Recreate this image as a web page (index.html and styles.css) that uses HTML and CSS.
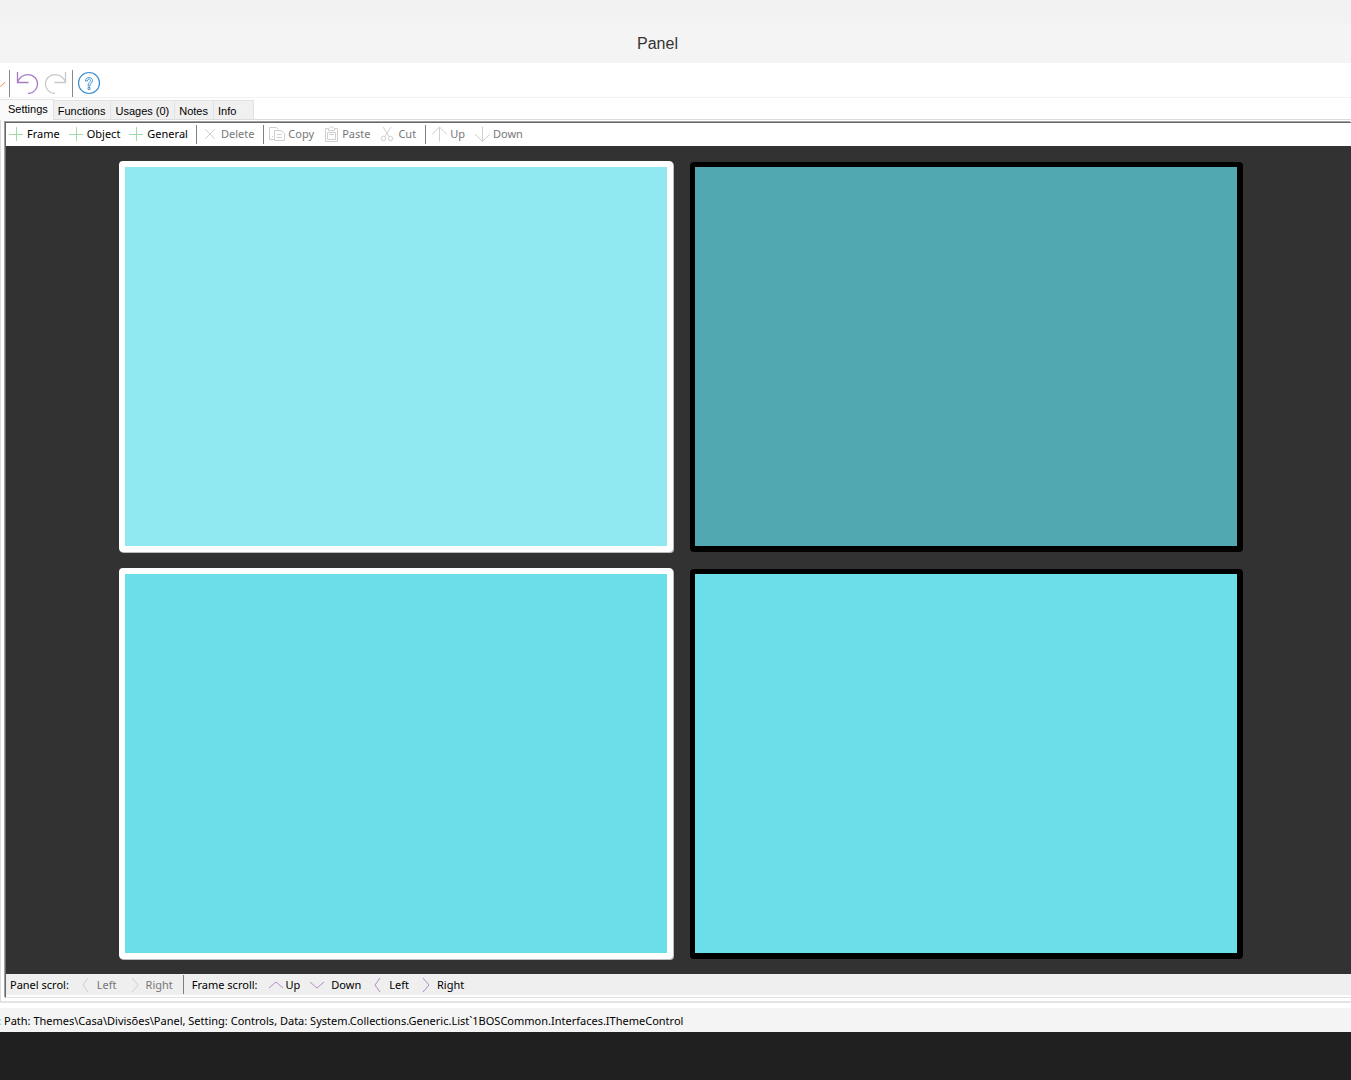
FILE: index.html
```html
<!DOCTYPE html>
<html lang="en">
<head>
<meta charset="utf-8">
<title>Panel</title>
<link rel="stylesheet" href="styles.css">
</head>
<body>
<header class="titlebar"><h1 class="title">Panel</h1></header>

<div class="quickbar">
  <svg class="check" viewBox="0 0 5 24"><path d="M0 14.500L1 15.500L5 11" stroke="#ef8a5a"/></svg>
  <span class="tall-sep"></span>
  <button class="quick" aria-label="Undo"><svg viewBox="0 0 24 26"><path d="M1.500 2V12.500H12.500M1.500 12C5 4 14 2.500 19 7.500C24 13 21 23 12 23.500" stroke="#a57bc4" stroke-width="1.300"/></svg></button>
  <button class="quick" aria-label="Redo" disabled><svg viewBox="0 0 24 26"><path d="M22.500 2V12.500H11.500M22.500 12C19 4 10 2.500 5 7.500C0 13 3 23 12 23.500" stroke="#c8c8c8" stroke-width="1.300"/></svg></button>
  <span class="tall-sep"></span>
  <button class="quick help" aria-label="Help"><svg viewBox="0 0 24 26"><circle cx="12" cy="13" r="10.500" stroke="#3a8dd0" stroke-width="1.200"/><path d="M8.500 11C8 6.500 15.500 6.500 15.500 10.500C15.500 13 13 13 13 16H11C11 12.500 13.500 12 13.500 10.500C13.500 8.500 10.500 8.500 10.500 11ZM11 17.500H13V19.500H11Z" stroke="#3a8dd0" stroke-width=".9"/></svg></button>
</div>

<div class="tabs" role="tablist">
  <button class="tab active" role="tab" aria-selected="true">Settings</button>
  <button class="tab" role="tab">Functions</button>
  <button class="tab" role="tab">Usages (0)</button>
  <button class="tab" role="tab">Notes</button>
  <button class="tab last" role="tab">Info</button>
</div>

<main class="page">
  <div class="editor">
    <div class="bar">
      <button class="tool"><svg viewBox="0 0 16 16"><path class="green" d="M1 8.500H15M8.500 1V15"/></svg>Frame</button>
      <button class="tool"><svg viewBox="0 0 16 16"><path class="green" d="M1 8.500H15M8.500 1V15"/></svg>Object</button>
      <button class="tool"><svg viewBox="0 0 16 16"><path class="green" d="M1 8.500H15M8.500 1V15"/></svg>General</button>
      <span class="sep"></span>
      <button class="tool" disabled><svg viewBox="0 0 16 16"><path class="grey" d="M3 3L13 13M13 3L3 13"/></svg>Delete</button>
      <span class="sep"></span>
      <button class="tool" disabled><svg viewBox="0 0 16 16"><path class="grey" d="M5.500 13.500H.5V1.500H7.500L9.500 3.500M5.500 4.500H12L15.500 7.500V14.500H5.500ZM8 8.500H13M8 11.500H13M3 10.500H4"/></svg>Copy</button>
      <button class="tool" disabled><svg viewBox="0 0 16 16"><path class="grey" d="M5.500 2.500H2.500V15.500H14.500V2.500H11.500M5.500 4.500V2.500L8.500 .5L11.500 2.500V4.500ZM4.500 6.500H12.500V13.500H4.500ZM6 8.500H11"/></svg>Paste</button>
      <button class="tool" disabled><svg viewBox="0 0 16 16"><path class="grey" d="M4 1L10.500 11M12 1L5.500 11"/><circle class="grey" cx="4.500" cy="12.500" r="2.200"/><circle class="grey" cx="11.500" cy="12.500" r="2.200"/></svg>Cut</button>
      <span class="sep"></span>
      <button class="tool" disabled><svg viewBox="0 0 16 16"><path class="grey" d="M8.500 15.500V1.500M1 8.500L8.500 1L16 8.500"/></svg>Up</button>
      <button class="tool" disabled><svg viewBox="0 0 16 16"><path class="grey" d="M8.500 .5V15M1 8L8.500 15.500L16 8"/></svg>Down</button>
    </div>
    <div class="canvas">
      <div class="frame light pale"></div>
      <div class="frame dark teal"></div>
      <div class="frame light"></div>
      <div class="frame dark"></div>
    </div>
    <div class="bar scrollbar">
      <span class="label">Panel scrol:</span>
      <button class="tool" disabled><svg viewBox="0 0 16 16"><path class="grey" d="M10 1L5 8L10 15"/></svg>Left</button>
      <button class="tool" disabled><svg viewBox="0 0 16 16"><path class="grey" d="M5 1L11 8L5 15"/></svg>Right</button>
      <span class="sep"></span>
      <span class="label after">Frame scroll:</span>
      <button class="tool"><svg viewBox="0 0 16 16"><path class="purple" d="M2 11L9 5L16 11"/></svg>Up</button>
      <button class="tool wide"><svg viewBox="0 0 16 16"><path class="purple" d="M1 5L8 11L15 5"/></svg>Down</button>
      <button class="tool"><svg viewBox="0 0 16 16"><path class="purple" d="M10 1L5 8L10 15"/></svg>Left</button>
      <button class="tool"><svg viewBox="0 0 16 16"><path class="purple" d="M5 1L11 8L5 15"/></svg>Right</button>
    </div>
  </div>
</main>

<div class="status"><span class="colon">:</span>Path: Themes\Casa\Divisões\Panel, Setting: Controls, Data: System.Collections.Generic.List`1BOSCommon.Interfaces.IThemeControl</div>
<footer class="desktop"></footer>
</body>
</html>
```
FILE: styles.css
```css
* { box-sizing: border-box; }
body {
  margin: 0;
  min-height: 100vh;
  display: flex;
  flex-direction: column;
  background: #fff;
  color: #000;
  font: 11px/16px "Noto Sans", "Open Sans", sans-serif;
}
button {
  margin: 0;
  padding: 0;
  border: 0;
  background: none;
  color: inherit;
  font: inherit;
}
svg { display: block; fill: none; flex: none; }
.titlebar {
  height: 63px;
  padding-top: 24px;
  background: linear-gradient(#f2f2f2 23px, #f4f4f4 23px);
  padding-right: 36px;
}
.title {
  margin: 0;
  text-align: center;
  color: #333;
  font: 16px/39px "Liberation Sans", Arial, sans-serif;
}
.quickbar {
  display: flex;
  align-items: center;
  height: 35px;
  padding-top: 6px;
  border-bottom: 1px solid #f2f2f2;
}
.check { width: 5px; height: 24px; }
.tall-sep { width: 1px; height: 27px; margin: 0 4px; background: #888; }
.quick { width: 27px; height: 26px; padding: 0 1px 0 2px; }
.quick svg { width: 24px; height: 26px; }
.help { margin-left: -2px; }
.tabs {
  display: flex;
  align-items: flex-end;
  height: 22px;
  font: 11px/16px "Liberation Sans", Arial, sans-serif;
  border-bottom: 1px solid #dcdcdc;
}
.tab {
  height: 19px;
  padding: 2px 5px 0 4px;
  background: #f0f0f0;
  border: 1px solid #e2e2e2;
  border-width: 1px 1px 0 0;
  text-align: left;
}
.tab.active {
  height: 21px;
  margin-bottom: -1px;
  padding: 0 5px 2px 8px;
  background: #f9f9f9;
}
.tab.last { min-width: 40px; }
.page {
  flex: 1;
  display: flex;
  padding: 2px 0 3px 4px;
  border-left: 1px solid #ddd;
  border-bottom: 2px solid #e3e3e3;
  background: #fff;
}
.editor {
  flex: 1;
  display: flex;
  flex-direction: column;
  border: 1px solid #696969;
  border-width: 1px 0 0 1px;
  border-bottom: 1px solid #e3e3e3;
  box-shadow: -1px -1px 0 #a0a0a0;
}
.bar {
  display: flex;
  align-items: center;
  gap: 8px;
  height: 23px;
  padding: 0 2px 1px;
  background: #fff;
}
.tool { display: flex; align-items: center; gap: 3px; height: 20px; }
.tool svg { width: 16px; height: 16px; }
.tool.wide { gap: 6px; }
.tool:disabled { padding-right: 1px; color: #777; }
.sep { width: 1px; height: 19px; margin-right: -3px; background: #808080; }
.green { stroke: #9fdcaa; }
.grey { stroke: #cfcfcf; }
.purple { stroke: #b48bcb; }
.canvas {
  flex: 1;
  display: grid;
  grid-template-columns: 1fr 1fr;
  grid-auto-rows: 1fr;
  gap: 16px;
  padding: 15px 108px 15px 113px;
  background: #323232;
}
.frame {
  border: 6px solid #fff;
  border-radius: 4px;
  background: #6bdfe9;
}
.light { box-shadow: 1px 1px 0 #bbb; }
.frame.dark {
  margin: 1px 0 0 1px;
  border-color: #000;
  border-width: 5px 6px 6px 5px;
}
.frame.pale { background: #90e9f1; }
.frame.teal { background: #51a8b1; }
.scrollbar {
  gap: 9px;
  padding: 0 4px;
  background: #efefef;
  border-bottom: 2px solid #fff;
}
.label.after { margin-left: 2px; }
.status {
  display: flex;
  height: 29px;
  border-top: 5px solid #fff;
  line-height: 25px;
  background: #f4f4f4;
}
.colon { width: 4px; color: #7ddbe6; text-indent: -1px; }
.desktop { height: 48px; background: #202020; }
```
